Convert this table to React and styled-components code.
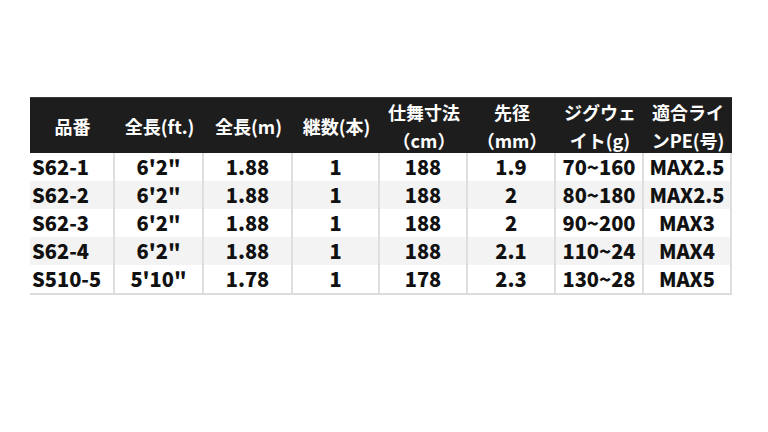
import React from "react";
import styled, { createGlobalStyle } from "styled-components";

const Global = createGlobalStyle`
  html, body { margin: 0; padding: 0; background: #ffffff; }
  body { font-family: "Noto Sans CJK JP", "Noto Sans", sans-serif; }
`;

const Page = styled.div`
  width: 768px;
  height: 432px;
  box-sizing: border-box;
  padding: 97px 0 0 30px;
`;

const Table = styled.div`
  display: grid;
  grid-template-columns: 85px 89px 89px 87px 88px 88px 88px 88px;
  width: 702px;
  border-bottom: 2px solid #dcdcdc;
`;

const HeadCell = styled.div`
  background: #1d1d1d;
  color: #ffffff;
  height: 56px;
  font-size: 18px;
  font-weight: 700;
  line-height: 28px;
  display: flex;
  flex-direction: column;
  align-items: center;
  justify-content: center;
  text-align: center;
  white-space: nowrap;
  border-top: 1px solid #3a3a3a;
  box-sizing: border-box;
`;

const Cell = styled.div`
  height: 28px;
  box-sizing: border-box;
  background: ${(p) => (p.$alt ? "#f3f3f3" : "#ffffff")};
  border-right: 2px solid #dedede;
  font-size: 20px;
  font-weight: 900;
  color: #111111;
  line-height: 28px;
  white-space: nowrap;
  text-align: ${(p) => (p.$left ? "left" : "center")};
  padding-left: ${(p) => (p.$left ? "2px" : "0")};
`;

const headers = [
  ["品番"],
  ["全長(ft.)"],
  ["全長(m)"],
  ["継数(本)"],
  ["仕舞寸法", "（cm）"],
  ["先径", "（mm）"],
  ["ジグウェ", "イト(g)"],
  ["適合ライ", "ンPE(号)"],
];

const rows = [
  ["S62-1", "6'2\"", "1.88", "1", "188", "1.9", "70~160", "MAX2.5"],
  ["S62-2", "6'2\"", "1.88", "1", "188", "2", "80~180", "MAX2.5"],
  ["S62-3", "6'2\"", "1.88", "1", "188", "2", "90~200", "MAX3"],
  ["S62-4", "6'2\"", "1.88", "1", "188", "2.1", "110~24", "MAX4"],
  ["S510-5", "5'10\"", "1.78", "1", "178", "2.3", "130~28", "MAX5"],
];

export default function App() {
  return (
    <Page>
      <Global />
      <Table>
        {headers.map((h, i) => (
          <HeadCell key={"h" + i}>
            {h.map((line, j) => (
              <span key={j}>{line}</span>
            ))}
          </HeadCell>
        ))}
        {rows.map((r, ri) =>
          r.map((v, ci) => (
            <Cell key={ri + "-" + ci} $alt={ri % 2 === 1} $left={ci === 0}>
              {v}
            </Cell>
          ))
        )}
      </Table>
    </Page>
  );
}
